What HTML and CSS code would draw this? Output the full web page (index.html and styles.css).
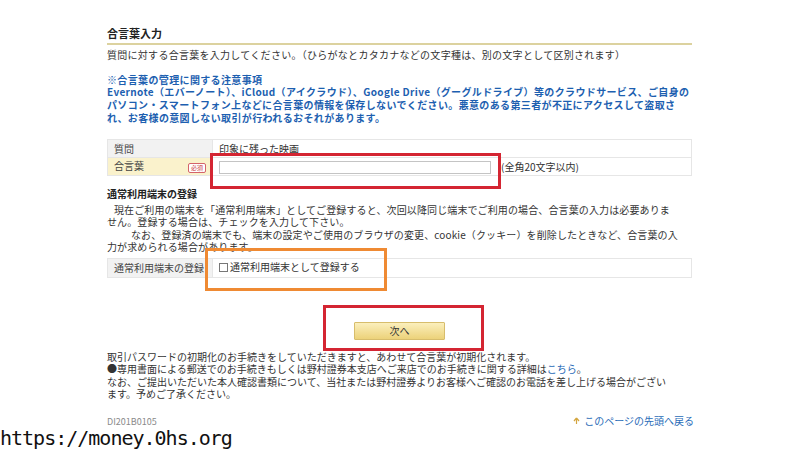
FILE: index.html
```html
<!DOCTYPE html>
<html lang="ja">
<head>
    <meta charset="UTF-8">
    <meta name="viewport" content="width=device-width, initial-scale=1.0">
    <title>合言葉入力</title>
    <link rel="stylesheet" href="styles.css">
</head>
<body>
    <div class="page">
        <h1 class="title">合言葉入力</h1>
        <p class="lead">質問に対する合言葉を入力してください。（ひらがなとカタカナなどの文字種は、別の文字として区別されます）</p>

        <p class="notice">
            ※合言葉の管理に関する注意事項<br>
            Evernote（エバーノート）、iCloud（アイクラウド）、Google Drive（グーグルドライブ）等のクラウドサービス、ご自身の<br>
            パソコン・スマートフォン上などに合言葉の情報を保存しないでください。悪意のある第三者が不正にアクセスして盗取さ<br>
            れ、お客様の意図しない取引が行われるおそれがあります。
        </p>

        <table class="form-table">
            <tr>
                <th class="label">質問</th>
                <td class="value">印象に残った映画</td>
            </tr>
            <tr>
                <th class="label label-required">合言葉<span class="badge">必須</span></th>
                <td class="value"><input class="text-input" type="text"><span class="hint">(全角20文字以内)</span></td>
            </tr>
        </table>

        <h2 class="subtitle">通常利用端末の登録</h2>
        <p class="desc">
            <span class="indent1"></span>現在ご利用の端末を「通常利用端末」としてご登録すると、次回以降同じ端末でご利用の場合、合言葉の入力は必要ありま<br>
            せん。登録する場合は、チェックを入力して下さい。<br>
            <span class="indent2"></span>なお、登録済の端末でも、端末の設定やご使用のブラウザの変更、cookie（クッキー）を削除したときなど、合言葉の入<br>
            力が求められる場合があります。
        </p>

        <table class="form-table device-table">
            <tr>
                <th class="label">通常利用端末の登録</th>
                <td class="value"><label class="check"><span class="box"></span>通常利用端末として登録する</label></td>
            </tr>
        </table>

        <div class="actions">
            <button class="next-btn" type="button">次へ</button>
        </div>

        <p class="info">
            取引パスワードの初期化のお手続きをしていただきますと、あわせて合言葉が初期化されます。<br>
            ●専用書面による郵送でのお手続きもしくは野村證券本支店へご来店でのお手続きに関する詳細は<a href="#">こちら</a>。<br>
            なお、ご提出いただいた本人確認書類について、当社または野村證券よりお客様へご確認のお電話を差し上げる場合がござい<br>
            ます。予めご了承ください。
        </p>

        <div class="footer">
            <span class="page-id">DI201B0105</span>
            <a class="to-top" href="#">
                <svg width="7" height="8" viewBox="0 0 7 8"><path d="M3.5 1 L1 4 M3.5 1 L6 4 M3.5 1 V7" stroke="#d4a640" stroke-width="1.2" fill="none"/></svg>
                このページの先頭へ戻る
            </a>
        </div>
    </div>

    <!-- annotation marks over the capture -->
    <div class="mark mark-input"></div>
    <div class="mark mark-device"></div>
    <div class="mark mark-next"></div>
    <div class="watermark">https://money.0hs.org</div>
</body>
</html>
```

FILE: styles.css
```css
* {
    box-sizing: border-box;
}

body {
    margin: 0;
    background: #fff;
    color: #333;
    font-family: "Noto Sans CJK JP", sans-serif;
    font-size: 10px;
    line-height: 12.5px;
    overflow: hidden;
    height: 450px;
}

.page {
    width: 585px;
    margin-left: 107px;
    padding-top: 26px;
}

.title {
    margin: 0;
    font-size: 11px;
    font-weight: bold;
    line-height: 14px;
    padding-bottom: 3px;
    border-bottom: 2px solid #dcd29f;
    color: #222;
}

.lead {
    margin: 4px 0 0;
    white-space: nowrap;
    letter-spacing: 0.28px;
}

.notice {
    margin: 12px 0 0;
    color: #1d5fb0;
    font-weight: bold;
    white-space: nowrap;
    line-height: 12.7px;
    letter-spacing: 0.36px;
}

/* form tables */
.form-table {
    width: 100%;
    margin-top: 15px;
    border-collapse: collapse;
}

.form-table th,
.form-table td {
    height: 18px;
    padding: 0 6px;
    border: 1px solid #e6e6e6;
    font-weight: normal;
    text-align: left;
    white-space: nowrap;
}

.label {
    width: 105px;
    background: #f2f2f2;
    color: #444;
}

.label-required {
    background: #faf2cc;
}

.badge {
    float: right;
    margin-top: 3px;
    padding: 0 2px;
    font-size: 6px;
    line-height: 8px;
    color: #c8323a;
    border: 1px solid #d4646a;
    border-radius: 2px;
    background: #fff;
}

.value {
    background: #fff;
}

.text-input {
    width: 272px;
    height: 13px;
    margin: 0 10px 0 0;
    padding: 0;
    border: 1px solid #c4c4c4;
    vertical-align: middle;
}

.hint {
    vertical-align: middle;
}

.subtitle {
    margin: 12px 0 0;
    font-size: 10px;
    font-weight: bold;
    line-height: 12.5px;
    color: #222;
}

.desc {
    margin: 3px 0 0;
    white-space: nowrap;
    letter-spacing: 0.12px;
}

.indent1 {
    display: inline-block;
    width: 7px;
}

.indent2 {
    display: inline-block;
    width: 24px;
}

.device-table {
    margin-top: 4px;
}

.device-table th,
.device-table td {
    height: 19px;
}

.check {
    display: inline-flex;
    align-items: center;
    gap: 2px;
}

.check .box {
    width: 9px;
    height: 9px;
    border: 1px solid #777;
    background: #fff;
}

.actions {
    display: flex;
    justify-content: center;
    margin-top: 44px;
}

.next-btn {
    width: 91px;
    height: 18px;
    padding: 0;
    font-family: inherit;
    font-size: 10px;
    color: #333;
    border: 1px solid #d7bd6c;
    border-radius: 1px;
    background: linear-gradient(#fbefbc, #ecd27a);
}

.info {
    margin: 11px 0 0;
    white-space: nowrap;
}

.info a,
.to-top {
    color: #2a6cb8;
    text-decoration: none;
}

.footer {
    display: flex;
    justify-content: space-between;
    align-items: center;
    margin-top: 14px;
}

.page-id {
    color: #8a8a8a;
    font-size: 9px;
    line-height: 11px;
}

.to-top {
    display: flex;
    align-items: center;
    gap: 4px;
    margin-right: -2px;
}

/* annotation boxes */
.mark {
    position: absolute;
    border: 3px solid #d42532;
}

.mark-input {
    left: 210px;
    top: 153px;
    width: 291px;
    height: 36px;
}

.mark-device {
    left: 205px;
    top: 248px;
    width: 182px;
    height: 43px;
    border-color: #ef8a33;
}

.mark-next {
    left: 323px;
    top: 305px;
    width: 161px;
    height: 46px;
}

.watermark {
    position: absolute;
    left: 0;
    top: 427px;
    font-family: "DejaVu Sans Mono", monospace;
    font-size: 20px;
    line-height: 22px;
    letter-spacing: -1px;
    color: #111;
}
```
